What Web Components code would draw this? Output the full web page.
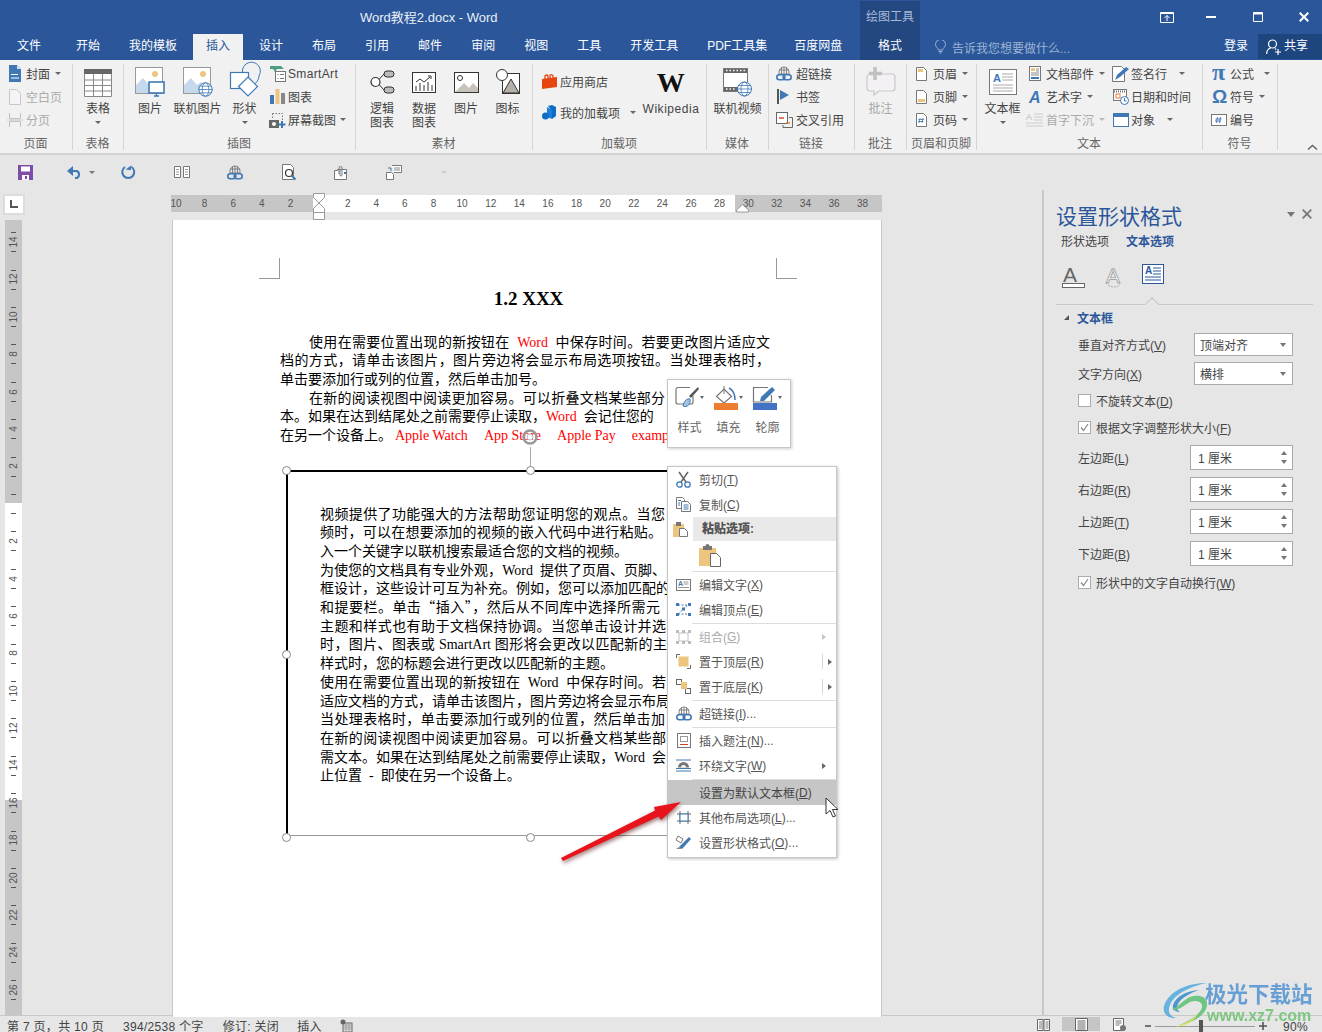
<!DOCTYPE html>
<html lang="zh-CN">
<head>
<meta charset="utf-8">
<title>Word教程2.docx - Word</title>
<style>
  html, body { margin: 0; height: 100%; overflow: hidden; background: #e6e6e6; }
  body { font: 12px "Liberation Sans", "Noto Sans CJK SC", sans-serif; color: #444; }
</style>
</head>
<body>
<wd-app></wd-app>

<script>
const CJK = '"Noto Sans CJK SC", sans-serif';
const UI = `"Liberation Sans", ${CJK}`;
const SERIF = `"Liberation Serif", ${CJK}`;

const B = '#3f78b5', G = '#777', T = '#ecc67f', O = '#ed7d31';
const globe = (x, y, r) => `<circle cx="${x}" cy="${y}" r="${r}" fill="#fff" stroke="${B}"/><ellipse cx="${x}" cy="${y}" rx="${r / 2}" ry="${r}" fill="none" stroke="${B}" stroke-width=".8"/><path d="M${x - r} ${y}h${2 * r}M${x - r + 1} ${y - r / 2}h${2 * r - 2}M${x - r + 1} ${y + r / 2}h${2 * r - 2}" stroke="${B}" stroke-width=".8"/>`;
const chain = `<path d="M8 1a5 5 0 0 0-5 5v2h10V6a5 5 0 0 0-5-5zM3 4h10M8 1v7M5.500 1.500v6.500M10.500 1.500v6.500" fill="none" stroke="#777" stroke-width=".9"/><rect x=".8" y="8.800" width="8" height="5" rx="2.500" fill="none" stroke="${B}" stroke-width="1.600"/><rect x="7.200" y="8.800" width="8" height="5" rx="2.500" fill="none" stroke="${B}" stroke-width="1.600"/>`;

// [width, height, svg content]
const ICONS = {
  cover: [14, 17, `<path d="M1 0h8l4 4v13H1z" fill="${B}"/><path d="M9 0l4 4H9z" fill="#cfdfee"/><path d="M3 10l1-1 1 1 1-1 1 1 1-1 1 1 1-1M3 13h8" stroke="#fff" fill="none"/>`],
  blank: [14, 16, `<path d="M1.500.5h7l4 4v11h-11z" fill="#f6f3f6" stroke="#c8c8c8"/>`],
  pagebreak: [16, 16, `<path d="M2.500 1v5.500h11V1M2.500 15v-5.500h11V15" fill="none" stroke="#c0c0c0"/><path d="M0 8h16" stroke="#c8c8c8"/>`],
  table: [28, 28, `<rect width="28" height="28" fill="#fff"/><rect width="28" height="5" fill="#666"/><path d="M.5 5v22.500h27V5M0 11h28M0 16.500h28M0 22h28M9.500 5v23M18.500 5v23" fill="none" stroke="#888"/>`],
  picture: [30, 31, `<rect x=".5" y=".5" width="27" height="26" fill="#fff" stroke="#999"/><path d="M1 26V18l7-7 6 7 4-3 3 3v8z" fill="#c6d8ec"/><circle cx="20" cy="7" r="3" fill="${T}"/><rect x="14" y="15" width="15" height="11" fill="#fff" stroke="${B}" stroke-width="1.600"/><path d="M19 29h5M21.500 26v3" stroke="${B}" stroke-width="1.300"/>`],
  onlinepic: [30, 31, `<rect x=".5" y=".5" width="27" height="26" fill="#fff" stroke="#999"/><path d="M1 26V18l7-7 6 7 4-3 3 3v8z" fill="#c6d8ec"/><circle cx="20" cy="7" r="3" fill="${T}"/>${globe(22.500, 22.500, 6.700)}`],
  shape: [30, 30, `<path d="M17 12A9 9 0 1 1 29 9c0 4-3 7-6 10" fill="none" stroke="${B}"/><rect x=".5" y="5.500" width="18" height="16" fill="#fff" stroke="${B}" stroke-width="1.200"/><path d="M18 10l9.500 9.500L18 29l-9.500-9.500z" fill="#fff" stroke="${B}" stroke-width="1.200"/>`],
  smartart: [16, 16, `<path d="M0 0h11l3 3H7L5 6 3 3H0z" fill="#4f9d84"/><rect x="5.500" y="5.500" width="10" height="10" fill="#fff" stroke="#777"/><path d="M7.500 8.500h1M10 8.500h4M7.500 12.500h1M10 12.500h4" stroke="#777"/>`],
  chart: [15, 15, `<rect y="6" width="4" height="9" fill="${B}"/><rect x="5.500" width="4" height="15" fill="${T}"/><rect x="11" y="4" width="4" height="11" fill="#888"/>`],
  screenshot: [17, 16, `<path d="M3.500 1.500h10v7M3.500 1.500v6" fill="none" stroke="#777" stroke-dasharray="1.500 1.500"/><rect y="8" width="10" height="8" fill="#666"/><circle cx="5" cy="12" r="2" fill="#fff"/><path d="M13 9v7M9.500 12.500h7" stroke="${B}" stroke-width="2"/>`],
  logic: [25, 24, `<circle cx="5.500" cy="12" r="4.500" fill="#fff" stroke="#333" stroke-width="1.200"/><path d="M9 9.500L14 4M9 14.500l5 5.500" stroke="#333" fill="none"/><rect x="14" y="1" width="10" height="6" rx="3" fill="#bbb" stroke="#333"/><rect x="14" y="17" width="10" height="6" rx="3" fill="#bbb" stroke="#333"/>`],
  data: [24, 21, `<rect x=".5" y=".5" width="23" height="20" fill="#fff" stroke="#333"/><path d="M4 19v-5M8 19v-8M12 19v-6M16 19v-9M20 19v-6M4 10l4-3 4 3 6-5M16 4h3v3" fill="none" stroke="#333"/>`],
  pic2: [25, 21, `<rect x=".5" y=".5" width="24" height="20" fill="#fff" stroke="#333"/><path d="M1 20l9-9 5 5 4-5 5 5v4z" fill="#c8c4bc"/><circle cx="6" cy="6" r="2.500" fill="#fff" stroke="#333"/>`],
  icon2: [24, 25, `<rect x="6.500" y="4.500" width="17" height="20" fill="#fff" stroke="#333"/><path d="M15 10l8 14H7z" fill="#b5b0a8" stroke="#333"/><circle cx="6" cy="6" r="5.500" fill="#fff" stroke="#333"/>`],
  store: [15, 15, `<path d="M0 5l15-2v10l-15 2z" fill="#e8440f"/><path d="M3 5V2q2-2 3 0v3M8 4V1q2-1 3 1v2" fill="none" stroke="#e8440f" stroke-width="1.300"/>`],
  addin: [15, 15, `<path d="M6 1l4-1 4 2v9l-4 3V6z" fill="#0f6cc4"/><path d="M5 2l5 3v9l-5-2z" fill="#1a7fd8"/><circle cx="3.500" cy="11" r="3.500" fill="#0f6cc4"/>`],
  video: [29, 29, `<rect x=".5" y=".5" width="24" height="23" fill="#fff" stroke="#777"/><path d="M1 1h23v4H1zM1 19h23v4H1z" fill="#666"/><path d="M3 2.500h1.500M6.500 2.500H8M10 2.500h1.500M13.500 2.500H15M17 2.500h1.500M20.500 2.500H22M3 21h1.500M6.500 21H8M10 21h1.500" stroke="#fff" stroke-width="1.500"/>${globe(21.500, 21, 7)}`],
  link: [16, 15, chain],
  bookmark: [14, 15, `<path d="M1 0v15" stroke="#555" stroke-width="2"/><path d="M3 1l9 5-9 5z" fill="${B}"/>`],
  xref: [17, 16, `<rect x=".5" y=".5" width="11" height="11" fill="#fff" stroke="#666"/><path d="M3 6h5" stroke="#d04020" stroke-width="1.400"/><path d="M13 5.500h3.500v10H7V13" fill="none" stroke="#666"/><path d="M10 11h4" stroke="${O}" stroke-width="1.400"/>`],
  comment: [30, 29, `<path d="M4 7h22a3 3 0 0 1 3 3v11a3 3 0 0 1-3 3H13l-5 4v-4H4a3 3 0 0 1-3-3V10a3 3 0 0 1 3-3z" fill="#f5f0f5" stroke="#c8c8c8" stroke-width="1.200"/><path d="M9 0v13M3 6.500h13" stroke="#c0c0c0" stroke-width="3.500"/>`],
  header: [11, 14, `<path d="M.5.5h7l3 3v10H.5z" fill="#fff" stroke="#777"/><rect x="2" y="2" width="5" height="3" fill="${T}"/>`],
  footer: [11, 14, `<path d="M.5.5h7l3 3v10H.5z" fill="#fff" stroke="#777"/><rect x="2" y="9" width="7" height="3" fill="${T}"/>`],
  pagenum: [11, 14, `<path d="M.5.5h7l3 3v10H.5z" fill="#fff" stroke="#777"/><path d="M4 5l-1 5M7 5l-1 5M2.500 6.500h5.500M2 8.500h5.500" stroke="${B}" stroke-width=".8"/>`],
  textbox: [28, 26, `<rect x=".5" y=".5" width="27" height="25" fill="#fff" stroke="#777"/><text x="4" y="13" font-family="Liberation Sans" font-size="11" font-weight="700" fill="${B}">A</text><path d="M13 5h11M13 8h11M13 11h11M4 16h20M4 19h20M4 22h20" stroke="#aaa"/>`],
  docpart: [12, 15, `<rect x=".5" y=".5" width="11" height="14" fill="#fff" stroke="#777"/><rect x="2" y="2" width="4" height="3" fill="${T}"/><path d="M7 3h3M7 5h3M2 7h8M2 9h8" stroke="#888"/><rect x="2" y="11" width="8" height="2" fill="${B}"/>`],
  wordart: [13, 14, `<text x="0" y="13" font-family="Liberation Sans" font-size="16" font-weight="700" font-style="italic" fill="${B}">A</text>`],
  dropcap: [17, 16, `<text x="0" y="8" font-family="Liberation Sans" font-size="9" fill="#bbb">A</text><path d="M8 2h9M8 5h9M8 8h9M0 11h17M0 14h17" stroke="#ccc"/>`],
  sign: [17, 16, `<path d="M.5.5h9l3 3v12H.5z" fill="#fff" stroke="#777"/><path d="M3 14l2-5 9-8 3 2-9 8z" fill="${B}"/>`],
  date: [16, 16, `<rect x=".5" y=".5" width="13" height="11" fill="#fff" stroke="#777"/><path d="M1 2.500h12" stroke="#777" stroke-width="2" stroke-dasharray="1 1"/><rect x="3" y="5" width="4" height="4" fill="#fff" stroke="${O}"/><circle cx="11.500" cy="11.500" r="4" fill="#fff" stroke="${B}"/><path d="M11.500 9v3h2" fill="none" stroke="${B}"/>`],
  object: [16, 14, `<rect x=".5" y=".5" width="15" height="13" fill="#fff" stroke="${B}"/><rect width="16" height="4" fill="${B}"/>`],
  pi: [15, 14, `<text x="0" y="13" font-family="Liberation Serif" font-size="24" font-weight="700" fill="${B}">π</text>`],
  omega: [15, 14, `<text x="0" y="13" font-family="Liberation Sans" font-size="19" font-weight="700" fill="${B}">Ω</text>`],
  numbox: [16, 12, `<rect x=".5" y=".5" width="15" height="11" fill="#fff" stroke="#777"/><path d="M6.500 3l-1 6M9.500 3l-1 6M4.500 5h6M4 7h6" stroke="${B}" stroke-width=".9"/>`],
  save: [15, 15, `<path d="M0 0h15v15H0z" fill="#7d4ea6"/><rect x="3" y="1.500" width="9" height="5" fill="#fff"/><rect x="4" y="10" width="7" height="5" fill="#fff"/><rect x="7" y="11" width="2" height="3" fill="#7d4ea6"/>`],
  undo: [15, 13, `<path d="M3 5h7a4 4 0 0 1 0 7H8" fill="none" stroke="${B}" stroke-width="2.200"/><path d="M6 0L0 5l6 5z" fill="${B}"/>`],
  redo: [14, 14, `<path d="M4 2a6 6 0 1 0 6.500 0" fill="none" stroke="${B}" stroke-width="2"/><path d="M10 0v5H5z" fill="${B}" transform="rotate(8 8 3)"/>`],
  book: [16, 12, `<path d="M.5.5h6v11h-6zM9.500.5h6v11h-6z" fill="#fff" stroke="#777"/><path d="M2 3.500h3M2 6h3M2 8.500h3M11 3.500h3M11 6h3M11 8.500h3" stroke="#999"/>`],
  preview: [14, 16, `<path d="M.5.5h8l3 3v12H.5z" fill="#fff" stroke="#777"/><circle cx="7" cy="9" r="3.500" fill="#fff" stroke="#333" stroke-width="1.200"/><path d="M9.500 11.500l4 4" stroke="${B}" stroke-width="2"/>`],
  clip: [16, 15, `<path d="M.5 5.500h3v-1h9v10h-12z" fill="#fff" stroke="#777" transform="translate(1 0)"/><path d="M6 9V3a1.500 1.500 0 0 1 3 0v7a1 1 0 0 1-2 0V4" fill="none" stroke="#777"/><rect x="11" y="7" width="2" height="2" fill="${B}"/>`],
  comm2: [16, 15, `<path d="M.5 7.500h5l2 2v5h-7z" fill="#fff" stroke="#777"/><path d="M6 .5h9.500v7H8" fill="#fff" stroke="#777"/><path d="M8 3h6M8 5h6" stroke="#888"/><path d="M2 3h3v3" fill="none" stroke="${B}"/>`],
  cut: [15, 17, `<path d="M3 1l7 10M12 1L5 11" stroke="#666" stroke-width="1.500"/><circle cx="3.500" cy="13.500" r="2.700" fill="#fff" stroke="${B}" stroke-width="1.300"/><circle cx="11.500" cy="13.500" r="2.700" fill="#fff" stroke="${B}" stroke-width="1.300"/>`],
  copy: [15, 15, `<path d="M.5.5h6l2 2v9h-8z" fill="#fff" stroke="#777"/><path d="M5.500 4.500h6l3 3v7h-9z" fill="#fff" stroke="#777"/><path d="M2 3.500h3M2 6h2M2 8h2M7.500 8h5M7.500 10h5M7.500 12h5" stroke="#3f78b5"/>`],
  paste: [15, 15, `<path d="M0 2h11v13H0z" fill="${T}"/><rect x="3" y="0" width="5" height="4" fill="#777"/><path d="M6.500 6.500h5l3 3v5h-8z" fill="#fff" stroke="#777"/>`],
  pastebig: [22, 23, `<path d="M0 4h17v18H0z" fill="${T}"/><path d="M4 2h9v4H4z" fill="#777"/><circle cx="8.500" cy="2" r="2" fill="#777"/><path d="M11.500 9.500h6l4 4v9h-10z" fill="#fff" stroke="#666"/>`],
  edittext: [15, 12, `<rect x=".5" y=".5" width="14" height="11" fill="#fff" stroke="#777"/><text x="2" y="7" font-family="Liberation Sans" font-size="7" font-weight="700" fill="${B}">A</text><path d="M7.500 3h5M7.500 5h5M2 8.500h11" stroke="#999"/>`],
  editpts: [15, 13, `<path d="M2 2h11M2 11h11M2 11L12 2" stroke="${B}" stroke-dasharray="2 1.500" fill="none"/><path d="M0 0h3v3H0zM12 0h3v3h-3zM0 10h3v3H0zM12 10h3v3h-3zM6 4.500h3v3H6z" fill="${B}"/>`],
  grp: [15, 14, `<rect x="3" y="3" width="9" height="8" fill="#fff" stroke="#c4c4c4"/><path d="M0 0h3v3H0zM12 0h3v3h-3zM0 11h3v3H0zM12 11h3v3h-3zM6 0h3v3H6zM6 11h3v3H6z" fill="#bcbcbc"/>`],
  front: [15, 15, `<path d="M.5 4V.5H4M11 14.500h3.500V11" fill="none" stroke="#666"/><rect x="2.500" y="2.500" width="10" height="10" fill="${T}"/>`],
  back: [15, 15, `<rect x=".5" y=".5" width="5" height="5" fill="#fff" stroke="#666"/><rect x="9.500" y="9.500" width="5" height="5" fill="#fff" stroke="#666"/><rect x="5" y="3" width="6" height="7" fill="${T}"/>`],
  caption: [14, 15, `<rect x=".5" y=".5" width="13" height="14" fill="#fff" stroke="#777"/><rect x="3.500" y="3.500" width="7" height="5" fill="#fff" stroke="#999"/><path d="M3 11.500h8" stroke="#d04020"/>`],
  wrap: [15, 13, `<path d="M0 1h15M0 12h15M0 9.500h15" stroke="${B}"/><path d="M2 8.500a5.500 5.500 0 0 1 11 0z" fill="#777"/><path d="M5 8.500a2.500 2.500 0 0 1 5 0z" fill="#fff"/>`],
  layout: [14, 13, `<path d="M3 0v13M11 0v13M0 3h14M0 10h14" stroke="#666"/><rect x="3" y="3" width="8" height="7" fill="#fff" stroke="#3f78b5"/>`],
  fmt: [16, 15, `<path d="M2 1l5 3-2 4-5-3z" fill="#fff" stroke="#777"/><path d="M3 12L13 2l2 2L6 14z" fill="${B}"/><path d="M0 14l3-2 3 2z" fill="#888"/>`],
  tbstyle: [24, 24, `<path d="M15 1.500H3a2 2 0 0 0-2 2V16a2 2 0 0 0 2 2h13a2 2 0 0 0 2-2v-6" fill="#fff" stroke="#777" stroke-width="1.200"/><path d="M23 1L14 10l2 2 8-9z" fill="#555"/><path d="M8 20c1-5 4-8 7-7 1 5-3 9-7 7z" fill="#a6c2e0" stroke="${B}"/>`],
  tbfill: [24, 24, `<path d="M10 3l7.500 7.500L10 17 2.500 10.500z" fill="#fff" stroke="#777" stroke-width="1.200"/><path d="M10 0v8" stroke="#777"/><path d="M15 2c4 2 6 6 6 12" fill="none" stroke="${B}" stroke-width="1.500"/><rect y="17" width="24" height="7" fill="${O}"/>`],
  tbline: [24, 24, `<path d="M15 1.500H.5v14.500h18V9" fill="#fff" stroke="#777" stroke-width="1.200"/><path d="M7 15l1-4L19 1l3 3-11 11z" fill="${B}"/><rect y="17" width="24" height="7" fill="#4472c4"/>`],
  paneA: [24, 24, `<text x="1" y="18" font-family="Liberation Sans" font-size="21" fill="#666">A</text><rect x=".5" y="19.500" width="22" height="4" fill="#fff" stroke="#666"/>`],
  paneO: [18, 24, `<text x="1" y="19" font-family="Liberation Sans" font-size="21" fill="#fff" stroke="#999" stroke-width=".8">A</text><path d="M3 21q6 4 12 0" fill="none" stroke="#aaa" stroke-dasharray="2 1"/>`],
  paneT: [22, 20, `<rect x=".5" y=".5" width="21" height="19" fill="#fff" stroke="#2b579a"/><text x="3" y="10" font-family="Liberation Sans" font-size="10" font-weight="700" fill="#2b579a">A</text><path d="M11 4h8M11 7h8M11 10h8M3 13h16M3 16h16" stroke="#2b579a"/>`],
  macro: [12, 12, `<circle cx="3" cy="3" r="2.500" fill="#666"/><rect x="3" y="4" width="9" height="9" fill="none" stroke="#666"/><path d="M3 6h9M3 8h9M3 10h9M6 4v9M9 4v9" stroke="#888" stroke-width=".7"/>`],
  readview: [13, 13, `<path d="M.5 1.500h5.500v11H.5zM7 1.500h5.500v11H7z" fill="#fff" stroke="#666"/><path d="M2 4h3M2 6h3M2 8h3M2 10h3M8.500 4h3M8.500 6h3M8.500 8h3M8.500 10h3" stroke="#777"/>`],
  printview: [13, 13, `<path d="M.5.5h12v12H.5z" fill="#fff" stroke="#666"/><path d="M2.500 3h8M2.500 5h8M2.500 7h8M2.500 9h8M2.500 11h8" stroke="#666"/>`],
  webview: [13, 13, `<path d="M.5.5h10v12H.5z" fill="#fff" stroke="#666"/><path d="M2.500 3h6M2.500 5h6M2.500 7h4" stroke="#777"/><circle cx="10" cy="10" r="3" fill="#777"/>`]
};

// common base: subclasses give css() and html()
class WdBase extends HTMLElement {
  constructor() {
    super();
    this.attachShadow({ mode: 'open' });
  }
  connectedCallback() {
    this.shadowRoot.innerHTML = `<style>${this.css()}</style>${this.html()}`;
  }
  css() { return ':host{display:block}'; }
  html() { return '<slot></slot>'; }
}

class WdIcon extends WdBase {
  css() { return ':host{display:inline-flex;flex:none;line-height:0}svg{display:block;overflow:visible}'; }
  html() {
    const [w, h, body] = ICONS[this.getAttribute('name')];
    return `<svg width="${w}" height="${h}" viewBox="0 0 ${w} ${h}">${body}</svg>`;
  }
}
customElements.define('wd-icon', WdIcon);

class WdTitlebar extends WdBase {
  css() {
    return `:host{display:block;height:60px;background:#2b579a;color:#fff;font:12px ${UI};position:relative}
    .top{height:34px;display:flex;align-items:center}
    .doc{margin-left:360px;font-size:13px;color:#e8eef7;padding-top:1px;line-height:1}
    .ctx{position:absolute;left:860px;top:1px;width:60px;height:59px;background:#234780;text-align:center;color:#fff}
    .ctx div{height:33px;line-height:33px;color:#a9bad6}
    .ctx span{display:block;line-height:25px}
    .ctl{margin-left:auto;display:flex;align-items:center;height:100%;padding-top:0}
    .ctl svg{display:block}
    .tabs{height:26px;display:flex;gap:3px;padding-left:4px;line-height:24px}
    .tabs span{padding:0 13px;white-space:nowrap;color:#fff}
    .tabs .first{margin-right:6px}
    .tabs .on{background:#f1f1f1;color:#2b579a}
    .tell{position:absolute;left:935px;top:34px;height:26px;display:flex;align-items:center;gap:6px;color:#9db3d4}
    .login{position:absolute;left:1224px;top:34px;line-height:24px}
    .share{position:absolute;left:1258px;top:34px;width:64px;height:25px;background:#1d457e;display:flex;align-items:center;gap:3px;padding-left:8px;box-sizing:border-box}
    .share span{margin-top:-4px}`;
  }
  html() {
    return `<div class="top"><span class="doc">Word教程2.docx - Word</span>
      <div class="ctl">
        <svg width="14" height="11" viewBox="0 0 14 11" style="margin-right:32px"><path d="M.5.5h13v10H.5z" fill="none" stroke="#fff"/><path d="M7 9V3.500M4.500 6L7 3.500 9.500 6M.5 1.500h13" fill="none" stroke="#fff"/></svg>
        <svg width="10" height="2" viewBox="0 0 10 2" style="margin-right:37px"><path d="M0 1h10" stroke="#fff" stroke-width="2"/></svg>
        <svg width="10" height="10" viewBox="0 0 10 10" style="margin-right:36px"><path d="M.5.5h9v9h-9z" fill="none" stroke="#fff"/><path d="M0 1.500h10" stroke="#fff" stroke-width="2"/></svg>
        <svg width="10" height="10" viewBox="0 0 10 10" style="margin-right:13px"><path d="M.7.7l8.600 8.600M9.300.7L.7 9.300" stroke="#fff" stroke-width="2"/></svg>
      </div></div>
      <div class="tabs">
        <span class="first">文件</span><span>开始</span><span>我的模板</span><span class="on">插入</span><span>设计</span><span>布局</span><span>引用</span><span>邮件</span><span>审阅</span><span>视图</span><span>工具</span><span>开发工具</span><span>PDF工具集</span><span style="margin-left:-2px">百度网盘</span>
      </div>
      <div class="ctx"><div>绘图工具</div><span>格式</span></div>
      <div class="tell"><svg width="11" height="14" viewBox="0 0 11 14"><path d="M3.500 10C3 8 .5 7 .5 4.500a5 5 0 0 1 10 0C10.500 7 8 8 7.500 10zM3.500 11.500h4M4.500 13h2" fill="none" stroke="#9db3d4"/></svg>告诉我您想要做什么...</div>
      <div class="login">登录</div>
      <div class="share"><svg width="15" height="16" viewBox="0 0 15 16"><circle cx="6.500" cy="5" r="4" fill="none" stroke="#fff" stroke-width="1.200"/><path d="M.7 15c0-3.500 2-5.500 4-6M9 9.500l1 1M12 10v6M9 13h6" fill="none" stroke="#fff" stroke-width="1.200"/></svg><span>共享</span></div>`;
  }
}
customElements.define('wd-titlebar', WdTitlebar);

class WdRibbon extends WdBase {
  css() {
    return `:host{display:flex;height:95px;box-sizing:border-box;background:#f1f1f1;border-bottom:2px solid #d4d4d4;padding-top:3px;font:12px ${UI};color:#444;position:relative}
    .up{position:absolute;left:1307px;top:84px}`;
  }
  html() {
    return `<slot></slot><svg class="up" width="11" height="6" viewBox="0 0 11 6"><path d="M1 5.500l4.500-4 4.500 4" fill="none" stroke="#666" stroke-width="1.500"/></svg>`;
  }
}
customElements.define('wd-ribbon', WdRibbon);

class WdGroup extends WdBase {
  css() {
    return `:host{display:flex;flex-direction:column;flex:none;height:90px;box-sizing:border-box;position:relative;width:${this.getAttribute('w')}px}
    :host::after{content:"";position:absolute;right:0;top:1px;bottom:3px;width:1px;background:#d4d4d4}
    .c{height:73px;display:flex;padding-left:${this.getAttribute('pad') || 0}px}
    .l{line-height:16px;text-align:center;color:#666;white-space:nowrap;overflow:hidden;padding-right:2px}`;
  }
  html() { return `<div class="c"><slot></slot></div><div class="l">${this.getAttribute('label')}</div>`; }
}
customElements.define('wd-group', WdGroup);

class WdCol extends WdBase {
  css() { return `:host{display:flex;flex-direction:column;flex:none;margin-top:-1px;width:${this.getAttribute('w')}px}`; }
}
customElements.define('wd-col', WdCol);

class WdBig extends WdBase {
  css() {
    const top = parseInt(this.getAttribute('top') || 4);
    return `:host{display:flex;flex-direction:column;align-items:center;flex:none;width:${this.getAttribute('w')}px;color:${this.hasAttribute('off') ? '#a8a8a8' : '#444'}}
    .i{height:${36 - top}px;padding-top:${top}px;display:flex;align-items:flex-start;justify-content:center}
    .t{line-height:14px;margin-top:3px;text-align:center;white-space:nowrap}
    i{width:0;height:0;border:3px solid transparent;border-top:3px solid #666;border-bottom:0;margin-top:5px}`;
  }
  html() {
    const ic = this.getAttribute('icon');
    return `<div class="i"><slot name="icon">${ic ? `<wd-icon name="${ic}"></wd-icon>` : ''}</slot></div><div class="t"><slot></slot></div>${this.hasAttribute('arrow') ? '<i></i>' : ''}`;
  }
}
customElements.define('wd-big', WdBig);

class WdSmall extends WdBase {
  css() {
    return `:host{display:flex;align-items:center;height:${this.getAttribute('h') || 23}px;white-space:nowrap;color:${this.hasAttribute('off') ? '#ababab' : '#444'}}
    .i{flex:none;display:flex;justify-content:center;width:${this.getAttribute('iw') || 16}px;margin-right:${this.getAttribute('gap') || 3}px}
    i{width:0;height:0;border:3px solid transparent;border-top:3px solid ${this.hasAttribute('off') ? '#bbb' : '#666'};border-bottom:0;margin-left:${this.getAttribute('am') || 5}px}`;
  }
  html() {
    return `<span class="i"><wd-icon name="${this.getAttribute('icon')}"></wd-icon></span><slot></slot>${this.hasAttribute('arrow') ? '<i></i>' : ''}`;
  }
}
customElements.define('wd-small', WdSmall);

class WdQat extends WdBase {
  css() {
    return `:host{display:block;height:35px;background:#e6e6e6}
    .r{display:grid;grid-template-columns:18px 33px 41px 40px 68px 38px 70px 34px 72px 28px;align-items:center;justify-items:center;height:34px;padding-left:16px}
    .u{display:flex;align-items:center;gap:7px;justify-self:start}
    i{width:0;height:0;border:3px solid transparent;border-top:3px solid #777;border-bottom:0}
    b{width:0;height:0;border:3px solid transparent;border-top:3px solid #ccc;border-bottom:0}`;
  }
  html() {
    return `<div class="r">
      <wd-icon name="save"></wd-icon>
      <span></span>
      <span class="u"><wd-icon name="undo"></wd-icon><i></i></span>
      <wd-icon name="redo"></wd-icon>
      <wd-icon name="book"></wd-icon>
      <wd-icon name="link"></wd-icon>
      <wd-icon name="preview"></wd-icon>
      <wd-icon name="clip"></wd-icon>
      <wd-icon name="comm2"></wd-icon>
      <b></b></div>`;
  }
}
customElements.define('wd-qat', WdQat);

class WdHruler extends WdBase {
  css() {
    return `:host{display:block;position:relative;width:711px;height:17px;margin-top:5px;background:linear-gradient(90deg,#c6c6c6 142px,#fff 142px,#fff 564px,#c6c6c6 564px);font:10px "Liberation Sans",sans-serif;color:#555}
    .n{display:flex;margin-left:-9.300px;width:740px;overflow:visible;line-height:17px}
    .n span{flex:none;width:28.620px;text-align:center}
    svg{position:absolute;overflow:visible}`;
  }
  html() {
    const nums = [10, 8, 6, 4, 2, '', 2, 4, 6, 8, 10, 12, 14, 16, 18, 20, 22, 24, 26, 28, 30, 32, 34, 36, 38];
    return `<div style="overflow:hidden;height:17px"><div class="n">${nums.map(n => `<span>${n}</span>`).join('')}</div></div>
    <svg style="left:142px;top:-2px" width="12" height="27" viewBox="0 0 12 27"><path d="M.5.5h11v4L6 10 .5 4.500zM6 10l5.500 5.500v4H.5v-4zM.5 19.500h11v7H.5z" fill="#fff" stroke="#999"/></svg>
    <svg style="left:565px;top:9px" width="13" height="8" viewBox="0 0 13 8"><path d="M6.500.5L12.500 6v2H.5V6z" fill="#fff" stroke="#999"/></svg>`;
  }
}
customElements.define('wd-hruler', WdHruler);

class WdVruler extends WdBase {
  css() {
    return `:host{display:block;width:17px;height:100%;margin-left:5px;overflow:hidden;background:linear-gradient(180deg,#c6c6c6 283px,#fff 283px,#fff 580px,#c6c6c6 580px);font:10px "Liberation Sans",sans-serif;color:#555}
    .w{margin-top:3.300px}
    .c{height:37.400px;display:flex;align-items:center;justify-content:center;position:relative}
    .c span{transform:rotate(-90deg);line-height:10px}
    .c::before,.c::after{content:"";position:absolute;left:6px;width:5px;height:1px;background:#555}
    .c::before{top:9px}.c::after{top:28px}`;
  }
  html() {
    const nums = [14, 12, 10, 8, 6, 4, 2, '', 2, 4, 6, 8, 10, 12, 14, 16, 18, 20, 22, 24, 26];
    return `<div class="w">${nums.map(n => `<div class="c"><span>${n}</span></div>`).join('')}</div>`;
  }
}
customElements.define('wd-vruler', WdVruler);

const SP = '&nbsp; ';

class WdPage extends WdBase {
  css() {
    return `:host{display:block;position:relative;width:710px;height:797px;box-sizing:border-box;margin-left:144px;background:#fff;border-left:1px solid #c8c8c8;border-right:1px solid #c8c8c8;padding:66px 0 0 107px;color:#000;font:14px ${SERIF}}
    h1{margin:0;font:700 19px/26px "Liberation Serif",serif;text-align:center;width:497px}
    .mk{position:absolute;width:20px;height:20px;top:38px;border-bottom:1px solid #999}
    .mk.a{left:86px;border-right:1px solid #999}.mk.b{left:603px;border-left:1px solid #999}
    .p{margin-top:21.500px;width:490px}
    .l{height:18.700px;line-height:18.700px;white-space:nowrap;overflow:hidden}
    .j{text-align:justify;text-align-last:justify;white-space:normal}
    .ind{padding-left:29px}
    .r{color:#f00}
    .q{font-family:${CJK};margin-top:-2px;margin-bottom:2px}
    .box{position:relative;margin:24px 0 0 6px;width:487px;height:366px;box-sizing:border-box;border-top:2px solid #000;border-left:2px solid #000;border-bottom:1px solid #999;padding:34px 0 0 32px}
    .h{position:absolute;width:7px;height:7px;border:1.500px solid #888;border-radius:50%;background:#fff}
    .rot{position:absolute;left:242px;top:-25px;width:1px;height:20px;background:#aaa}
    .rh{position:absolute;left:232px;top:-45px;width:20px;height:20px}`;
  }
  html() {
    const h = (x, y) => `<span class="h" style="left:${x - 5}px;top:${y - 5}px"></span>`;
    // each line of the text box stops where the menu starts covering it
    const j = (t, end, cls = '') => `<div class="l j ${cls}" style="width:${end - 320}px">${t}</div>`;
    const n = t => `<div class="l">${t}</div>`;
    return `<span class="mk a"></span><span class="mk b"></span>
    <h1>1.2 XXX</h1>
    <div class="p">
      <div class="l j ind">使用在需要位置出现的新按钮在${SP}<span class="r">Word</span>${SP}中保存时间。若要更改图片适应文</div>
      <div class="l j">档的方式，请单击该图片，图片旁边将会显示布局选项按钮。当处理表格时，</div>
      ${n('单击要添加行或列的位置，然后单击加号。')}
      <div class="l j ind" style="width:356px">在新的阅读视图中阅读更加容易。可以折叠文档某些部分</div>
      ${n(`本。如果在达到结尾处之前需要停止读取，<span class="r">Word</span>${SP}会记住您的`)}
      <div class="l">在另一个设备上。<span class="r" style="margin-left:3px">Apple Watch</span><span class="r" style="margin-left:16px">App Store</span><span class="r" style="margin-left:16px">Apple Pay</span><span class="r" style="margin-left:16px">examp</span></div>
    </div>
    <div class="box">
      <span class="rot"></span>
      <svg class="rh" viewBox="0 0 20 20"><circle cx="10" cy="10" r="6.500" fill="none" stroke="#999" stroke-width="2.500"/><circle cx="10" cy="10" r="3" fill="#fff" stroke="#bbb"/></svg>
      ${h(-1, -1)}${h(243, -1)}${h(486, -1)}${h(-1, 183)}${h(-1, 366)}${h(243, 366)}
      ${j('视频提供了功能强大的方法帮助您证明您的观点。当您', 665)}
      ${j('频时，可以在想要添加的视频的嵌入代码中进行粘贴。', 662)}
      ${n('入一个关键字以联机搜索最适合您的文档的视频。')}
      ${j(`为使您的文档具有专业外观，Word${SP}提供了页眉、页脚、`, 666)}
      ${j('框设计，这些设计可互为补充。例如，您可以添加匹配的', 670)}
      ${j('和提要栏。单击“插入”，然后从不同库中选择所需元', 660, 'q')}
      ${j('主题和样式也有助于文档保持协调。当您单击设计并选', 666)}
      ${j('时，图片、图表或&nbsp;SmartArt&nbsp;图形将会更改以匹配新的主', 667)}
      ${n('样式时，您的标题会进行更改以匹配新的主题。')}
      ${j(`使用在需要位置出现的新按钮在${SP}Word${SP}中保存时间。若`, 666)}
      ${j('适应文档的方式，请单击该图片，图片旁边将会显示布局', 670)}
      ${j('当处理表格时，单击要添加行或列的位置，然后单击加', 665)}
      ${j('在新的阅读视图中阅读更加容易。可以折叠文档某些部', 666)}
      ${j(`需文本。如果在达到结尾处之前需要停止读取，Word${SP}会`, 666)}
      ${n(`止位置${SP}-${SP}即使在另一个设备上。`)}
    </div>`;
  }
}
customElements.define('wd-page', WdPage);

class WdSelect extends WdBase {
  css() {
    return `:host{display:flex;align-items:center;justify-content:space-between;box-sizing:border-box;width:99px;height:23px;background:#fff;border:1px solid #ababab;padding:0 6px 0 5px;color:#444}
    i{width:0;height:0;border:3.500px solid transparent;border-top:4px solid #777;border-bottom:0}`;
  }
  html() { return '<slot></slot><i></i>'; }
}
customElements.define('wd-select', WdSelect);

class WdSpin extends WdBase {
  css() {
    return `:host{display:flex;align-items:center;justify-content:space-between;box-sizing:border-box;width:103px;height:25px;background:#fff;border:1px solid #ababab;padding:0 5px 0 7px;color:#444}
    span{display:flex;flex-direction:column;gap:5px}
    i{display:block;width:0;height:0;border:3.500px solid transparent;border-bottom:4px solid #777;border-top:0}
    i+i{border-top:4px solid #777;border-bottom:0}`;
  }
  html() { return '<slot></slot><span><i></i><i></i></span>'; }
}
customElements.define('wd-spin', WdSpin);

class WdCheck extends WdBase {
  css() {
    return `:host{display:flex;align-items:center;gap:5px;height:100%;color:#444;white-space:nowrap}
    b{display:block;width:11px;height:11px;background:#fff;border:1px solid #ababab;flex:none;line-height:0}`;
  }
  html() {
    const tick = this.hasAttribute('on') ? '<svg width="11" height="11" viewBox="0 0 11 11"><path d="M2 5.500l2.500 3L9 2" fill="none" stroke="#888" stroke-width="1.200"/></svg>' : '';
    return `<b>${tick}</b><span><slot></slot></span>`;
  }
}
customElements.define('wd-check', WdCheck);

class WdPane extends WdBase {
  css() {
    return `:host{display:block;box-sizing:border-box;width:280px;height:825px;border-left:2px solid #c8c8c8;background:#e6e6e6;position:relative;font:12px ${UI};color:#444}
    h2{margin:0;padding:12px 0 0 12px;font:400 21px/26px ${CJK};color:#2b579a}
    .win{position:absolute;left:243px;top:19px;display:flex;align-items:center;gap:7px}
    .win i{width:0;height:0;border:4.500px solid transparent;border-top:5px solid #777;border-bottom:0}
    .tabs{display:flex;padding:5px 0 0 17px;line-height:18px}
    .tabs b{margin-left:17px;color:#2b579a}
    .icons{display:flex;align-items:flex-end;gap:19px;margin-left:18px;height:37px}
    .rule{height:11px;margin:5px 8px 0 12px;border-bottom:1px solid #c8c8c8;width:257px;position:relative}
    .rule::after{content:"";position:absolute;left:91px;top:6px;width:9px;height:9px;background:#e6e6e6;border-left:1px solid #c8c8c8;border-top:1px solid #c8c8c8;transform:rotate(45deg)}
    .sec{display:flex;align-items:center;height:18px;margin-top:3px;padding-left:20px;gap:8px;color:#2b579a;font-weight:700}
    .sec i{width:0;height:0;border-left:5px solid transparent;border-bottom:5px solid #555}
    .row{display:flex;align-items:center;justify-content:space-between;width:215px;margin-left:34px;white-space:nowrap}
    .row>span:first-child{flex:none}`;
  }
  html() {
    return `<h2>设置形状格式</h2>
    <div class="win"><i></i><svg width="10" height="10" viewBox="0 0 10 10"><path d="M.7.7l8.600 8.600M9.300.7L.7 9.300" stroke="#777" stroke-width="1.800"/></svg></div>
    <div class="tabs"><span>形状选项</span><b>文本选项</b></div>
    <div class="icons"><wd-icon name="paneA"></wd-icon><wd-icon name="paneO"></wd-icon><wd-icon name="paneT" style="margin-bottom:4px"></wd-icon></div>
    <div class="rule"></div>
    <div class="sec"><i></i>文本框</div>
    <div class="row" style="height:23px;margin-top:7px"><span>垂直对齐方式(<u>V</u>)</span><wd-select>顶端对齐</wd-select></div>
    <div class="row" style="height:23px;margin-top:6px"><span>文字方向(<u>X</u>)</span><wd-select>横排</wd-select></div>
    <div class="row" style="height:27px;margin-top:2px"><wd-check>不旋转文本(<u>D</u>)</wd-check></div>
    <div class="row" style="height:27px"><wd-check on>根据文字调整形状大小(<u>F</u>)</wd-check></div>
    <div class="row" style="height:25px;margin-top:4px"><span>左边距(<u>L</u>)</span><wd-spin>1 厘米</wd-spin></div>
    <div class="row" style="height:25px;margin-top:7px"><span>右边距(<u>R</u>)</span><wd-spin>1 厘米</wd-spin></div>
    <div class="row" style="height:25px;margin-top:7px"><span>上边距(<u>T</u>)</span><wd-spin>1 厘米</wd-spin></div>
    <div class="row" style="height:25px;margin-top:7px"><span>下边距(<u>B</u>)</span><wd-spin>1 厘米</wd-spin></div>
    <div class="row" style="height:27px;margin-top:3px"><wd-check on>形状中的文字自动换行(<u>W</u>)</wd-check></div>`;
  }
}
customElements.define('wd-pane', WdPane);

class WdStatus extends WdBase {
  css() {
    return `:host{display:flex;align-items:center;height:15px;box-sizing:border-box;border-top:1px solid #c8c8c8;background:#e6e6e6;font:12px ${UI};color:#444;white-space:nowrap;padding-left:7px;padding-top:2px;letter-spacing:.3px}
    span{line-height:12px;margin-top:5px}
    .v{flex:none;display:flex;align-items:center;justify-content:center;width:38px;height:14px}
    .on{background:#c6c6c6}
    .sl{position:relative;width:100px;height:1px;background:#999;margin:4px 4px 0 4px}
    .sl::after{content:"";position:absolute;left:44px;top:-6px;width:4px;height:13px;background:#555}
    svg{display:block;margin-top:4px;flex:none}`;
  }
  html() {
    return `<span>第 7 页，共 10 页</span><span style="margin-left:19px">394/2538 个字</span><span style="margin-left:19px">修订: 关闭</span><span style="margin-left:18px">插入</span>
    <wd-icon name="macro" style="margin:2px 0 0 18px"></wd-icon>
    <div style="margin-left:auto;display:flex;align-items:center">
      <div class="v"><wd-icon name="readview"></wd-icon></div><div class="v on"><wd-icon name="printview"></wd-icon></div><div class="v"><wd-icon name="webview"></wd-icon></div>
      <svg style="margin-left:7px" width="6" height="8" viewBox="0 0 6 8"><path d="M0 4h6" stroke="#555" stroke-width="1.600"/></svg><div class="sl"></div><svg width="8" height="8" viewBox="0 0 8 8"><path d="M0 4h8M4 0v8" stroke="#555" stroke-width="1.600"/></svg><span style="margin:5px 14px 0 16px">90%</span>
    </div>`;
  }
}
customElements.define('wd-status', WdStatus);

class WdMiniBar extends WdBase {
  css() {
    return `:host{position:absolute;left:667px;top:379px;width:124px;height:69px;box-sizing:border-box;background:#fff;border:1px solid #c6c6c6;box-shadow:1px 1px 3px rgba(0,0,0,.2);display:flex;padding:6px 0 0 2px;font:12px ${UI};color:#666}
    div{width:39px;display:flex;flex-direction:column;align-items:center;gap:4px}
    p{margin:0;display:flex;gap:1px;align-items:flex-start;height:28px}
    i{width:0;height:0;border:2.500px solid transparent;border-top:3px solid #666;border-bottom:0;margin-top:10px}`;
  }
  html() {
    const b = (ic, t) => `<div><p><wd-icon name="${ic}"></wd-icon><i></i></p>${t}</div>`;
    return b('tbstyle', '样式') + b('tbfill', '填充') + b('tbline', '轮廓');
  }
}
customElements.define('wd-minibar', WdMiniBar);

class WdMenuItem extends WdBase {
  css() {
    return `:host{display:flex;align-items:center;height:25px;color:${this.hasAttribute('off') ? '#aaa' : '#555'};white-space:nowrap;${this.hasAttribute('hot') ? 'background:#c6c6c6;color:#444;' : ''}}
    .i{flex:none;width:31px;display:flex;justify-content:center}
    .a{margin-left:auto;display:flex;align-items:center;height:15px;width:14px;box-sizing:border-box}
    .a.s{border-left:1px solid #d8d8d8;padding-left:5px}
    .a i{width:0;height:0;border:3.500px solid transparent;border-left:4px solid ${this.hasAttribute('off') ? '#c4c4c4' : '#666'};border-right:0}`;
  }
  html() {
    const ic = this.getAttribute('icon');
    const arr = this.getAttribute('arrow');
    return `<span class="i">${ic ? `<wd-icon name="${ic}"></wd-icon>` : ''}</span><slot></slot>${arr !== null ? `<span class="a ${arr}"><i></i></span>` : ''}`;
  }
}
customElements.define('wd-menu-item', WdMenuItem);

class WdMenu extends WdBase {
  css() {
    return `:host{position:absolute;left:667px;top:466px;width:170px;height:392px;box-sizing:border-box;background:#fff;border:1px solid #c6c6c6;box-shadow:1px 1px 3px rgba(0,0,0,.25);font:12px ${UI}}
    ::slotted(hr){margin:1px 0 0 24px;height:1px;border:0;background:#ddd}`;
  }
}
customElements.define('wd-menu', WdMenu);

class WdPasteHead extends WdBase {
  css() {
    return `:host{display:block}
    .h{display:flex;align-items:center;height:24px;font-weight:700;color:#555}
    .i{width:25px;flex:none;display:flex;justify-content:center}
    .h b{flex:1;background:#e9e9e9;height:24px;line-height:24px;padding-left:9px}
    .p{height:29px;padding:3px 0 0 31px;box-sizing:border-box}`;
  }
  html() {
    return `<div class="h"><span class="i"><wd-icon name="paste"></wd-icon></span><b>粘贴选项:</b></div><div class="p"><wd-icon name="pastebig"></wd-icon></div>`;
  }
}
customElements.define('wd-paste-head', WdPasteHead);

class WdWatermark extends WdBase {
  css() {
    return `:host{position:absolute;left:1163px;top:980px;width:155px;height:50px;pointer-events:none}
    svg{position:absolute;left:0;top:2px;opacity:.9}
    .a{position:absolute;left:42px;top:0;font:700 21.500px/26px ${CJK};color:#5d9ad3;white-space:nowrap;opacity:.92}
    .b{position:absolute;left:44px;top:26px;font:700 16px/20px "Liberation Sans",sans-serif;color:#74c476;white-space:nowrap;opacity:.9}`;
  }
  html() {
    return `<svg width="44" height="46" viewBox="0 0 44 46"><path d="M44 1C26 1 6 8 1 24c-2 8 5 13 12 12-6-2-9-6-6-13C11 12 28 4 44 1z" fill="#5aaee0"/><path d="M36 8C24 9 13 14 10 23c-1 5 3 7 7 7-3-2-4-4-2-8 3-6 12-11 21-14z" fill="#3d8fc9"/><path d="M9 28c6 1 11-4 18-8 5-2 11-1 12 3 1 7-9 14-24 21 10-2 28-9 29-21 1-9-9-11-17-8-7 3-12 10-18 13z" fill="#63c27a"/><path d="M12 45c10-3 20-8 24-16-3 9-12 15-24 16z" fill="#e7e04f"/></svg>
    <div class="a">极光下载站</div><div class="b">www.xz7.com</div>`;
  }
}
customElements.define('wd-watermark', WdWatermark);

class WdApp extends WdBase {
  css() {
    return `:host{display:block;position:relative;width:1322px;height:1032px;overflow:hidden;background:#e6e6e6}
    .work{display:flex;height:825px}
    .left{width:1040px;flex:none;display:grid;grid-template-columns:28px 1012px;grid-template-rows:30px 795px}
    .tabbox{width:28px;height:27px;padding:4px 0 0 3px;box-sizing:border-box}
    .tabbox div{width:18px;height:17px;background:#fff;border:2px solid #dcdcdc;position:relative}
    .tabbox svg{position:absolute;left:5px;top:4px}
    .rh{padding-left:143px}
    .arrow{position:absolute;left:550px;top:790px;filter:drop-shadow(1px 2px 2px rgba(70,0,0,.55))}
    .cursor{position:absolute;left:825px;top:797px}`;
  }
  html() {
    return `<wd-titlebar></wd-titlebar>
    <wd-ribbon>
      <wd-group w="73" label="页面" pad="7"><wd-col w="66">
        <wd-small icon="cover" arrow>封面</wd-small>
        <wd-small icon="blank" off>空白页</wd-small>
        <wd-small icon="pagebreak" off>分页</wd-small>
      </wd-col></wd-group>
      <wd-group w="51" label="表格"><wd-big w="50" icon="table" top="6" arrow>表格</wd-big></wd-group>
      <wd-group w="232" label="插图" pad="2">
        <wd-big w="48" icon="picture">图片</wd-big><wd-big w="47" icon="onlinepic">联机图片</wd-big><wd-big w="47" icon="shape" arrow>形状</wd-big>
        <wd-col w="86">
          <wd-small icon="smartart" iw="17" gap="2" style="margin-left:1px;letter-spacing:.35px">SmartArt</wd-small>
          <wd-small icon="chart" iw="17" gap="2" style="margin-left:1px">图表</wd-small>
          <wd-small icon="screenshot" iw="17" gap="2" am="4" arrow style="margin-left:1px">屏幕截图</wd-small>
        </wd-col>
      </wd-group>
      <wd-group w="177" label="素材" pad="5">
        <wd-big w="42" icon="logic" top="7">逻辑<br>图表</wd-big><wd-big w="42" icon="data" top="9">数据<br>图表</wd-big><wd-big w="42" icon="pic2" top="9">图片</wd-big><wd-big w="41" icon="icon2" top="6">图标</wd-big>
      </wd-group>
      <wd-group w="174" label="加载项" pad="8">
        <wd-col w="101" style="padding-top:4px;box-sizing:border-box">
          <wd-small h="31" icon="store">应用商店</wd-small>
          <wd-small h="31" icon="addin" arrow am="10">我的加载项</wd-small>
        </wd-col>
        <wd-big w="58" top="6" style="letter-spacing:.55px">
          <span slot="icon" style="font:700 28px/28px 'Liberation Serif',serif;color:#111">W</span>Wikipedia</wd-big>
      </wd-group>
      <wd-group w="62" label="媒体"><wd-big w="61" icon="video" top="5">联机视频</wd-big></wd-group>
      <wd-group w="86" label="链接" pad="7"><wd-col w="78">
        <wd-small icon="link" gap="4">超链接</wd-small>
        <wd-small icon="bookmark" gap="4">书签</wd-small>
        <wd-small icon="xref" gap="4">交叉引用</wd-small>
      </wd-col></wd-group>
      <wd-group w="52" label="批注"><wd-big w="51" icon="comment" off top="4">批注</wd-big></wd-group>
      <wd-group w="70" label="页眉和页脚" pad="8"><wd-col w="60">
        <wd-small icon="header" iw="12" gap="6" arrow>页眉</wd-small>
        <wd-small icon="footer" iw="12" gap="6" arrow>页脚</wd-small>
        <wd-small icon="pagenum" iw="12" gap="6" arrow>页码</wd-small>
      </wd-col></wd-group>
      <wd-group w="226" label="文本">
        <wd-big w="51" icon="textbox" top="6" arrow>文本框</wd-big>
        <wd-col w="84">
          <wd-small icon="docpart" iw="14" gap="4" arrow>文档部件</wd-small>
          <wd-small icon="wordart" iw="14" gap="4" arrow>艺术字</wd-small>
          <wd-small icon="dropcap" iw="17" gap="3" off arrow style="margin-left:-2px">首字下沉</wd-small>
        </wd-col>
        <wd-col w="90">
          <wd-small icon="sign" iw="17" gap="2" arrow am="12">签名行</wd-small>
          <wd-small icon="date" iw="17" gap="2">日期和时间</wd-small>
          <wd-small icon="object" iw="17" gap="2" arrow am="12">对象</wd-small>
        </wd-col>
      </wd-group>
      <wd-group w="75" label="符号" pad="8"><wd-col w="66">
        <wd-small icon="pi" iw="16" gap="3" arrow am="10">公式</wd-small>
        <wd-small icon="omega" iw="16" gap="3" arrow>符号</wd-small>
        <wd-small icon="numbox" iw="16" gap="3">编号</wd-small>
      </wd-col></wd-group>
    </wd-ribbon>
    <wd-qat></wd-qat>
    <div class="work">
      <div class="left">
        <div class="tabbox"><div><svg width="8" height="8" viewBox="0 0 8 8"><path d="M1 0v7h7" fill="none" stroke="#555" stroke-width="2"/></svg></div></div>
        <div class="rh"><wd-hruler></wd-hruler></div>
        <wd-vruler></wd-vruler>
        <wd-page></wd-page>
      </div>
      <div style="width:2px"></div>
      <wd-pane></wd-pane>
    </div>
    <wd-status></wd-status>
    <wd-minibar></wd-minibar>
    <wd-menu>
      <wd-menu-item icon="cut">剪切(<u>T</u>)</wd-menu-item>
      <wd-menu-item icon="copy">复制(<u>C</u>)</wd-menu-item>
      <wd-paste-head></wd-paste-head>
      <hr>
      <wd-menu-item icon="edittext">编辑文字(<u>X</u>)</wd-menu-item>
      <wd-menu-item icon="editpts">编辑顶点(<u>E</u>)</wd-menu-item>
      <hr>
      <wd-menu-item icon="grp" off arrow>组合(<u>G</u>)</wd-menu-item>
      <wd-menu-item icon="front" arrow="s">置于顶层(<u>R</u>)</wd-menu-item>
      <wd-menu-item icon="back" arrow="s">置于底层(<u>K</u>)</wd-menu-item>
      <hr>
      <wd-menu-item icon="link">超链接(<u>I</u>)...</wd-menu-item>
      <hr>
      <wd-menu-item icon="caption">插入题注(<u>N</u>)...</wd-menu-item>
      <wd-menu-item icon="wrap" arrow>环绕文字(<u>W</u>)</wd-menu-item>
      <hr>
      <wd-menu-item hot>设置为默认文本框(<u>D</u>)</wd-menu-item>
      <wd-menu-item icon="layout">其他布局选项(<u>L</u>)...</wd-menu-item>
      <wd-menu-item icon="fmt">设置形状格式(<u>O</u>)...</wd-menu-item>
    </wd-menu>
    <svg class="arrow" width="140" height="80" viewBox="0 0 140 80"><path d="M11 68L105 20.500l-1-3.500 27-5-20 18-2.500-3.500L13 71z" fill="#e8141c"/></svg>
    <svg class="cursor" width="14" height="21" viewBox="0 0 14 21"><path d="M1 1v16l4-3.500 3 6.500 2.500-1-3-6.500H13z" fill="#fff" stroke="#333"/></svg>
    <wd-watermark></wd-watermark>`;
  }
}
customElements.define('wd-app', WdApp);
</script>
</body>
</html>
